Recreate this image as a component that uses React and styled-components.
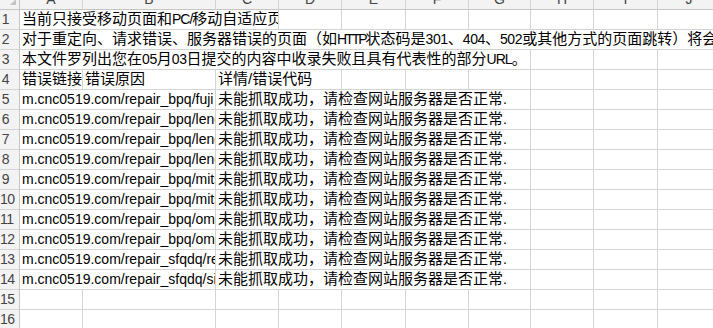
import React from 'react';
import styled, { createGlobalStyle } from 'styled-components';

const GlobalStyle = createGlobalStyle`
  body {
    margin: 0;
    background: #fff;
    overflow: hidden;
  }
`;

const Viewport = styled.div`
  width: 713px;
  height: 328px;
  overflow: hidden;
  background: #fff;
`;

const Sheet = styled.div`
  display: grid;
  grid-template-columns: 20px 63px 133px 63px 63px 64px 63px 62px 63px 64px 63px;
  grid-auto-rows: 20px;
  width: 721px;
  margin-top: -10px;
  font-family: "Liberation Sans", "Noto Sans CJK SC", sans-serif;
`;

const Corner = styled.div`
  box-sizing: border-box;
  background: #f3f3f3;
  border-right: 1px solid #c6c6c6;
  border-bottom: 1px solid #c6c6c6;
  display: flex;
  justify-content: flex-end;
  align-items: flex-end;
  padding: 0 3px 4px 0;
`;

const SelectAll = styled.span`
  width: 0;
  height: 0;
  border-left: 6px solid transparent;
  border-bottom: 6px solid #c4c4c4;
`;

const ColHead = styled.div`
  box-sizing: border-box;
  background: #f3f3f3;
  border-right: 1px solid #d4d4d4;
  border-bottom: 1px solid #c6c6c6;
  color: #444;
  font-size: 14px;
  line-height: 19px;
  text-align: center;
`;

const RowHead = styled.div`
  box-sizing: border-box;
  background: #f3f3f3;
  border-right: 1px solid #c6c6c6;
  border-bottom: 1px solid #d4d4d4;
  color: #444;
  font-size: 14px;
  line-height: 19px;
  text-align: center;
  padding-right: 8px;
  letter-spacing: -0.5px;
`;

const Cell = styled.div`
  box-sizing: border-box;
  grid-column: span ${(props) => props.span || 1};
  border-right: 1px solid #d4d4d4;
  border-bottom: 1px solid #d4d4d4;
  overflow: hidden;
  white-space: nowrap;
  display: flex;
  align-items: flex-end;
  padding: 0 0 1px 2px;
  font-size: 15px;
  line-height: 18px;
  color: #000;
`;

const Latin = styled.span`
  font-size: 14px;
  letter-spacing: ${(props) => props.tight || 0}px;
`;

const columns = ['A', 'B', 'C', 'D', 'E', 'F', 'G', 'H', 'I', 'J'];

const urls = [
  'm.cnc0519.com/repair_bpq/fuji',
  'm.cnc0519.com/repair_bpq/lenovo',
  'm.cnc0519.com/repair_bpq/lenovo',
  'm.cnc0519.com/repair_bpq/lenovo',
  'm.cnc0519.com/repair_bpq/mitsubishi',
  'm.cnc0519.com/repair_bpq/mitsubishi',
  'm.cnc0519.com/repair_bpq/omron',
  'm.cnc0519.com/repair_bpq/omron',
  'm.cnc0519.com/repair_sfqdq/rexroth',
  'm.cnc0519.com/repair_sfqdq/siemens',
];

const Blank = ({ count }) =>
  Array.from({ length: count }, (_, i) => <Cell key={'b' + i} />);

export default () => {
  return (
    <Viewport>
      <GlobalStyle />
      <Sheet>
        <Corner><SelectAll /></Corner>
        {columns.map((c) => <ColHead key={c}>{c}</ColHead>)}

        <RowHead>1</RowHead>
        <Cell span={3}>当前只接受移动页面和<Latin tight={-1}>PC/</Latin>移动自适应页面</Cell>
        <Blank count={7} />

        <RowHead>2</RowHead>
        <Cell span={10}>
          对于重定向、请求错误、服务器错误的页面（如<Latin tight={-2}>HTTP</Latin>状态码是<Latin tight={-0.4}>301</Latin>、<Latin tight={-0.4}>404</Latin>、<Latin tight={-0.4}>502</Latin>或其他方式的页面跳转）将会被过滤
        </Cell>

        <RowHead>3</RowHead>
        <Cell span={7}>
          本文件罗列出您在<Latin tight={-0.4}>05</Latin>月<Latin tight={-0.4}>03</Latin>日提交的内容中收录失败且具有代表性的部分<Latin tight={-1}>URL</Latin>。
        </Cell>
        <Blank count={3} />

        <RowHead>4</RowHead>
        <Cell>错误链接</Cell>
        <Cell>错误原因</Cell>
        <Cell span={2}>详情/错误代码</Cell>
        <Blank count={6} />

        {urls.map((url, i) => (
          <React.Fragment key={i}>
            <RowHead>{i + 5}</RowHead>
            <Cell span={2}><Latin>{url}</Latin></Cell>
            <Cell span={5}>未能抓取成功，请检查网站服务器是否正常<Latin>.</Latin></Cell>
            <Blank count={3} />
          </React.Fragment>
        ))}

        {[15, 16].map((n) => (
          <React.Fragment key={n}>
            <RowHead>{n}</RowHead>
            <Blank count={10} />
          </React.Fragment>
        ))}
      </Sheet>
    </Viewport>
  );
};
